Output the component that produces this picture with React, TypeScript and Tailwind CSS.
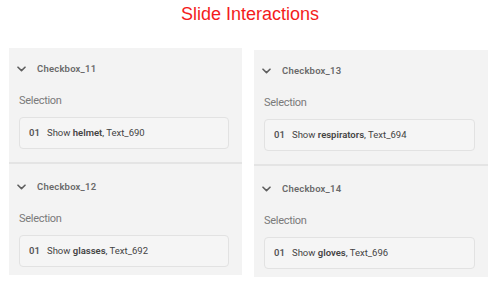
const Chevron = () => (
  <svg width="9" height="6" viewBox="0 0 9 6" fill="none" className="shrink-0">
    <path d="M1 1.2 L4.5 4.6 L8 1.2" stroke="#5f5f5f" strokeWidth="1.6" strokeLinecap="round" strokeLinejoin="round" />
  </svg>
);

type Item = { name: string; word: string; text: string };

const Section = ({ item, first }: { item: Item; first?: boolean }) => (
  <div className={first ? "pt-[13px] pb-[13px] border-b-2 border-[#e4e4e4]" : "pt-[15px] pb-[8px]"}>
    <div className="flex items-center h-4 pl-2 gap-[11px]">
      <Chevron />
      <span className="text-[9.5px] font-semibold text-[#6a6a6a] tracking-[0.2px]">{item.name}</span>
    </div>
    <div className="mt-[17px] pl-[10px] h-[14px] flex items-center text-[11px] tracking-[-0.3px] text-[#7a7a7a]">Selection</div>
    <div className="mt-[9px] ml-[10px] mr-[13px] h-8 flex items-center rounded-[4px] border border-[#e2e2e2] bg-[#f5f5f5] pl-[9px] text-[9.5px] text-[#444]">
      <span className="font-semibold text-[#555] w-[18px]">01</span>
      <span>
        Show <span className="font-semibold">{item.word}</span>, {item.text}
      </span>
    </div>
  </div>
);

const Panel = ({ items, className }: { items: Item[]; className: string }) => (
  <div className={`bg-[#f3f3f3] ${className}`}>
    <Section item={items[0]} first />
    <Section item={items[1]} />
  </div>
);

export default function App() {
  return (
    <div className="w-[500px] h-[287px] bg-white font-['Roboto',sans-serif] overflow-hidden">
      <div className="pt-[4px] h-[48px] text-center text-[18px] leading-[20px] text-[#f41c1c] font-['Liberation_Sans',sans-serif]">
        Slide Interactions
      </div>
      <div className="flex items-start pl-[9px] gap-[12px]">
        <Panel
          className="w-[233px]"
          items={[
            { name: "Checkbox_11", word: "helmet", text: "Text_690" },
            { name: "Checkbox_12", word: "glasses", text: "Text_692" },
          ]}
        />
        <Panel
          className="w-[234px] mt-[2px]"
          items={[
            { name: "Checkbox_13", word: "respirators", text: "Text_694" },
            { name: "Checkbox_14", word: "gloves", text: "Text_696" },
          ]}
        />
      </div>
    </div>
  );
}
